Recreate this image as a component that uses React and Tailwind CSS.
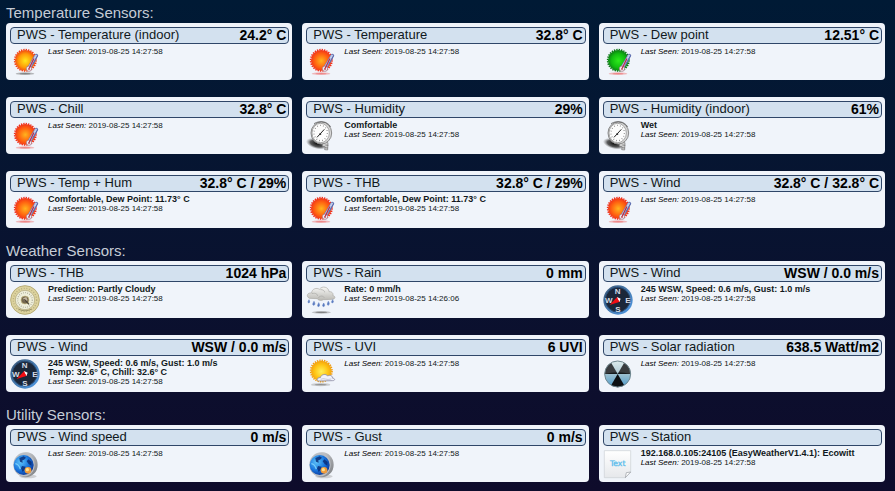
import React from "react";

const SEEN = "2019-08-25 14:27:58";

function Icon({ label, children }) {
  return (
    <svg viewBox="0 0 90 90" className="h-[30px] w-[30px] shrink-0" role="img" aria-label={label}>
      {children}
    </svg>
  );
}

const SUN_COLORS = {
  warm: ["#ffe81c", "#ff9a08", "#f03a14"],
  hot: ["#ffb41e", "#ff6210", "#ee2c1c"],
  dew: ["#2eea1c", "#12bd10", "#0b7414"],
  uv: ["#fff05a", "#ffc414", "#f09a10"],
};

function SunDisc({ id, kind, cy }) {
  const [inner, mid, outer] = SUN_COLORS[kind];
  return (
    <>
      <defs>
        <radialGradient id={id} cx="50%" cy="52%" r="55%">
          <stop offset="0" stopColor={inner} />
          <stop offset="0.6" stopColor={mid} />
          <stop offset="1" stopColor={outer} />
        </radialGradient>
      </defs>
      <circle cx="46" cy={cy} r="32" fill="none" stroke={outer} strokeWidth="5" strokeDasharray="4 3.18" />
      <circle cx="46" cy={cy} r="31" fill={`url(#${id})`} />
    </>
  );
}

function SunIcon({ id, kind }) {
  const shadow = kind === "warm" ? "#777777" : "#ee7b7b";
  return (
    <Icon label="Temperature">
      <ellipse cx="45" cy="80" rx="28" ry="4" fill={shadow} opacity="0.5" />
      <ellipse cx="45" cy="80" rx="17" ry="2" fill={shadow} opacity="0.8" />
      <SunDisc id={id} kind={kind} cy="40" />
      <path d="M79 26 L59 60" stroke="#6f7fb5" strokeWidth="11" strokeLinecap="round" />
      <path d="M78 27 L59 59" stroke="#c3cdea" strokeWidth="7" strokeLinecap="round" />
      <circle cx="57" cy="65" r="8" fill="#f1edf2" stroke="#9a6a7c" strokeWidth="2" />
      <path d="M71 36 L57 65" stroke="#b8304c" strokeWidth="4" strokeLinecap="round" />
      <path d="M83 25 L68 52" stroke="#5566b0" strokeWidth="3" />
      <circle cx="57" cy="66" r="3" fill="#c56270" />
    </Icon>
  );
}

function UvIcon({ id }) {
  return (
    <Icon label="UV index">
      <ellipse cx="44" cy="77" rx="29" ry="5" fill="#999999" opacity="0.45" />
      <ellipse cx="44" cy="77" rx="18" ry="2" fill="#777777" opacity="0.7" />
      <SunDisc id={id} kind="uv" cy="36" />
      <path
        d="M38 66 C29 64 35 54 43 56 C45 46 60 43 65 51 C73 46 81 52 79 57 C88 58 88 65 80 65 Z"
        fill="#f1f2fa"
        stroke="#8b8ba2"
        strokeWidth="2.5"
      />
      <path d="M44 61 C53 55 62 65 76 60" fill="none" stroke="#c5c8da" strokeWidth="3" />
    </Icon>
  );
}

function GaugeIcon({ id }) {
  return (
    <Icon label="Humidity">
      <defs>
        <radialGradient id={id}>
          <stop offset="0" stopColor="#111111" />
          <stop offset="0.6" stopColor="#333333" stopOpacity="0.8" />
          <stop offset="1" stopColor="#777777" stopOpacity="0" />
        </radialGradient>
      </defs>
      <ellipse cx="33" cy="68" rx="34" ry="16" fill={`url(#${id})`} transform="rotate(14 33 68)" />
      <path d="M49 63 L66 65 L65 87 L56 86 L57 77 L49 76 Z" fill="#cfcfcf" stroke="#777777" strokeWidth="2" />
      <path d="M58 72 L67 73 M57 80 L66 81" stroke="#666666" strokeWidth="2" />
      <ellipse cx="46" cy="36" rx="31" ry="33" fill="#d9d9d9" stroke="#8a8a8a" strokeWidth="3" />
      <ellipse cx="44" cy="36" rx="26" ry="29" fill="#fcfcfc" stroke="#858585" strokeWidth="2" />
      <ellipse cx="44" cy="36" rx="20" ry="23" fill="none" stroke="#777777" strokeWidth="4" strokeDasharray="2 7" />
      <path d="M33 49 L55 25" stroke="#222222" strokeWidth="3" />
      <circle cx="43" cy="39" r="3" fill="#333333" />
      <path d="M24 8 C42 -3 65 1 74 18" fill="none" stroke="#444444" strokeWidth="2" />
    </Icon>
  );
}

function BarometerIcon() {
  return (
    <Icon label="Barometer">
      <circle cx="45" cy="45" r="43" fill="#ddd39e" stroke="#b8ad78" strokeWidth="3" />
      <circle cx="45" cy="45" r="35" fill="none" stroke="#8f875f" strokeWidth="4" strokeDasharray="3 5" opacity="0.5" />
      <circle cx="45" cy="45" r="29" fill="#eeeeda" stroke="#aaa278" strokeWidth="2" />
      <circle cx="45" cy="45" r="22" fill="none" stroke="#8c8b78" strokeWidth="4" strokeDasharray="1.5 5" />
      <circle cx="45" cy="45" r="12" fill="#75684f" stroke="#c9bd84" strokeWidth="2" />
      <path d="M39 40 L49 36 L53 46 L45 49 Z" fill="#c3b6a0" />
      <path d="M43 43 L57 58" stroke="#4b4435" strokeWidth="4" />
      <path d="M25 72 Q45 83 65 72" fill="none" stroke="#9c946a" strokeWidth="3" />
    </Icon>
  );
}

function RainIcon({ id }) {
  return (
    <Icon label="Rain">
      <defs>
        <linearGradient id={id} x1="0" y1="0" x2="0" y2="1">
          <stop offset="0" stopColor="#f7f7f5" />
          <stop offset="1" stopColor="#b9b8b3" />
        </linearGradient>
      </defs>
      <ellipse cx="46" cy="82" rx="29" ry="4" fill="#777777" opacity="0.4" />
      <ellipse cx="46" cy="82" rx="18" ry="2" fill="#666666" opacity="0.7" />
      <path
        d="M10 40 C-1 34 4 22 17 24 C17 11 33 7 40 13 C49 1 68 6 69 20 C80 19 83 28 80 31 C90 34 88 42 79 43 L52 44 C45 49 36 45 34 41 Z"
        fill={`url(#${id})`}
        stroke="#aaa9a5"
        strokeWidth="2"
      />
      <path d="M18 26 C29 22 36 29 34 33 M43 14 C51 13 56 18 56 22 M37 39 C42 31 51 32 55 38" fill="none" stroke="#a6a6a3" strokeWidth="2" />
      <g fill="#5275bd" stroke="#6f8cc8" strokeWidth="2">
        <path d="M9 44 Q3 53 8 54 Q14 53 9 44 Z" />
        <path d="M24 49 Q17 60 23 61 Q30 59 24 49 Z" />
        <path d="M38 53 Q32 64 37 65 Q44 63 38 53 Z" />
        <path d="M53 54 Q47 64 52 65 Q59 64 53 54 Z" />
        <path d="M67 49 Q61 60 66 61 Q73 59 67 49 Z" />
        <path d="M80 44 Q74 53 79 54 Q85 53 80 44 Z" />
      </g>
    </Icon>
  );
}

function CompassIcon({ id }) {
  return (
    <Icon label="Wind direction">
      <defs>
        <linearGradient id={id} x1="0" y1="0" x2="1" y2="1">
          <stop offset="0" stopColor="#3b5775" />
          <stop offset="1" stopColor="#4f9be8" />
        </linearGradient>
      </defs>
      <circle cx="45" cy="45" r="44" fill={`url(#${id})`} />
      <circle cx="44" cy="44" r="37" fill="#1b2739" stroke="#284a73" strokeWidth="3" />
      <g fill="#d5dbe5" fontFamily="Liberation Sans, Arial, sans-serif" fontSize="24" fontWeight="bold" textAnchor="middle">
        <text x="44" y="28">N</text>
        <text x="17" y="55">W</text>
        <text x="75" y="54">E</text>
        <text x="45" y="82">S</text>
      </g>
      <path d="M20 60 L43 35 L51 50 Z" fill="#f20d14" />
      <path d="M42 36 L53 41 L49 51 Z" fill="#ffffff" />
      <circle cx="43" cy="48" r="4" fill="#f20d14" />
    </Icon>
  );
}

function RadiationIcon({ id }) {
  return (
    <Icon label="Solar radiation">
      <defs>
        <linearGradient id={id} x1="0" y1="0" x2="0" y2="1">
          <stop offset="0" stopColor="#d8e8e9" />
          <stop offset="0.45" stopColor="#a6c5d1" />
          <stop offset="1" stopColor="#4d9bcb" />
        </linearGradient>
      </defs>
      <circle cx="44" cy="45" r="39" fill={`url(#${id})`} />
      <path d="M44 45 L5 45 A39 39 0 0 1 24.5 11.2 Z" fill="#171b1e" />
      <path d="M44 45 L63.5 11.2 A39 39 0 0 1 83 45 Z" fill="#171b1e" />
      <path d="M44 45 L63.5 78.8 A39 39 0 0 1 24.5 78.8 Z" fill="#0c0f12" />
      <path d="M5 45 A39 39 0 0 1 83 45 Q44 34 5 45 Z" fill="#ffffff" opacity="0.15" />
      <circle cx="44" cy="45" r="39" fill="none" stroke="#70878f" strokeWidth="3" />
    </Icon>
  );
}

function GlobeIcon({ id }) {
  return (
    <Icon label="Wind speed">
      <defs>
        <linearGradient id={`${id}-ring`} x1="0" y1="0" x2="1" y2="1">
          <stop offset="0" stopColor="#e3e5e8" />
          <stop offset="1" stopColor="#77797d" />
        </linearGradient>
        <radialGradient id={`${id}-sea`} cx="35%" cy="35%" r="70%">
          <stop offset="0" stopColor="#5ec4fa" />
          <stop offset="0.6" stopColor="#1874dc" />
          <stop offset="1" stopColor="#0b389b" />
        </radialGradient>
      </defs>
      <ellipse cx="54" cy="82" rx="26" ry="6" fill="#999999" opacity="0.4" />
      <ellipse cx="47" cy="47" rx="36" ry="38" fill={`url(#${id}-ring)`} />
      <ellipse cx="42" cy="47" rx="32" ry="35" fill="#b9bdc3" />
      <circle cx="41" cy="48" r="30" fill={`url(#${id}-sea)`} />
      <path d="M28 27 L41 22 L48 26 L42 32 L37 34 L38 41 L30 38 Z M55 31 L65 39 L64 50 L56 45 L50 37 Z M36 51 L47 53 L44 62 L38 69 L33 58 Z" fill="#0b2e78" opacity="0.85" />
      <path d="M16 44 Q26 45 31 60" fill="none" stroke="#77cefb" strokeWidth="4" />
      <circle cx="54" cy="64" r="10" fill="#ef9b3b" />
      <circle cx="52" cy="62" r="5" fill="#ffe08a" />
    </Icon>
  );
}

function TextIcon({ id }) {
  return (
    <Icon label="Text">
      <defs>
        <linearGradient id={id} x1="0" y1="0" x2="0" y2="1">
          <stop offset="0" stopColor="#ffffff" />
          <stop offset="1" stopColor="#e6e8eb" />
        </linearGradient>
      </defs>
      <path d="M4 5 H83 V70 L67 86 H4 Z" fill={`url(#${id})`} stroke="#ccd0d5" strokeWidth="2" />
      <path d="M83 69 L70 71 L67 86 Z" fill="#ffffff" stroke="#94999f" strokeWidth="2" />
      <text x="44" y="52" textAnchor="middle" fill="#5cbdec" stroke="#5cbdec" strokeWidth="1" fontFamily="DejaVu Sans, sans-serif" fontSize="23">
        Text
      </text>
    </Icon>
  );
}

const SECTIONS = [
  {
    title: "Temperature Sensors:",
    sensors: [
      { name: "Temperature (indoor)", value: "24.2° C", icon: <SunIcon id="t1" kind="warm" /> },
      { name: "Temperature", value: "32.8° C", icon: <SunIcon id="t2" kind="hot" /> },
      { name: "Dew point", value: "12.51° C", icon: <SunIcon id="t3" kind="dew" /> },
      { name: "Chill", value: "32.8° C", icon: <SunIcon id="t4" kind="hot" /> },
      { name: "Humidity", value: "29%", lines: ["Comfortable"], icon: <GaugeIcon id="g1" /> },
      { name: "Humidity (indoor)", value: "61%", lines: ["Wet"], icon: <GaugeIcon id="g2" /> },
      { name: "Temp + Hum", value: "32.8° C / 29%", lines: ["Comfortable, Dew Point: 11.73° C"], icon: <SunIcon id="t5" kind="hot" /> },
      { name: "THB", value: "32.8° C / 29%", lines: ["Comfortable, Dew Point: 11.73° C"], icon: <SunIcon id="t6" kind="hot" /> },
      { name: "Wind", value: "32.8° C / 32.8° C", icon: <SunIcon id="t7" kind="hot" /> },
    ],
  },
  {
    title: "Weather Sensors:",
    sensors: [
      { name: "THB", value: "1024 hPa", lines: ["Prediction: Partly Cloudy"], icon: <BarometerIcon /> },
      { name: "Rain", value: "0 mm", lines: ["Rate: 0 mm/h"], seen: "2019-08-25 14:26:06", icon: <RainIcon id="r1" /> },
      { name: "Wind", value: "WSW / 0.0 m/s", lines: ["245 WSW, Speed: 0.6 m/s, Gust: 1.0 m/s"], icon: <CompassIcon id="c1" /> },
      {
        name: "Wind",
        value: "WSW / 0.0 m/s",
        lines: ["245 WSW, Speed: 0.6 m/s, Gust: 1.0 m/s", "Temp: 32.6° C, Chill: 32.6° C"],
        icon: <CompassIcon id="c2" />,
      },
      { name: "UVI", value: "6 UVI", icon: <UvIcon id="u1" /> },
      { name: "Solar radiation", value: "638.5 Watt/m2", icon: <RadiationIcon id="s1" /> },
    ],
  },
  {
    title: "Utility Sensors:",
    sensors: [
      { name: "Wind speed", value: "0 m/s", icon: <GlobeIcon id="w1" /> },
      { name: "Gust", value: "0 m/s", icon: <GlobeIcon id="w2" /> },
      { name: "Station", lines: ["192.168.0.105:24105 (EasyWeatherV1.4.1): Ecowitt"], icon: <TextIcon id="x1" /> },
    ],
  },
];

function SensorCard({ name, value, lines = [], seen = SEEN, icon }) {
  return (
    <article className="rounded bg-[#f0f4fa] pt-1 pr-[3px] pb-[3px] pl-1 text-[#101820]">
      <header className="flex h-[17px] items-start justify-between rounded border border-[#2f4668] bg-[#d3e1ef] pr-0.5 pl-1.5">
        <h3 className="text-[13px] leading-[13px]">PWS - {name}</h3>
        <strong className="text-[14px] leading-[15px] font-bold text-black">{value}</strong>
      </header>
      <div className="flex gap-2 pt-[3px]">
        {icon}
        <div className="text-[9px] leading-[9px]">
          {lines.map((line) => (
            <p key={line} className="font-bold">
              {line}
            </p>
          ))}
          <p className="text-[8px] leading-[9px]">
            <em className="text-black">Last Seen:</em> {seen}
          </p>
        </div>
      </div>
    </article>
  );
}

export default function App() {
  return (
    <main className="min-h-screen bg-linear-to-b from-[#001a35] to-[#0e0b2b] pr-2.5 pl-1.5 font-['Liberation_Sans',Arial,sans-serif]">
      {SECTIONS.map((section) => (
        <section key={section.title} className="pb-2.5">
          <h2 className="pt-[3px] pb-px text-[15px] leading-[19px] text-[#c5ccd6]">{section.title}</h2>
          <div className="grid grid-cols-3 gap-x-2.5 gap-y-[17px]">
            {section.sensors.map((sensor, index) => (
              <SensorCard key={index} {...sensor} />
            ))}
          </div>
        </section>
      ))}
    </main>
  );
}
